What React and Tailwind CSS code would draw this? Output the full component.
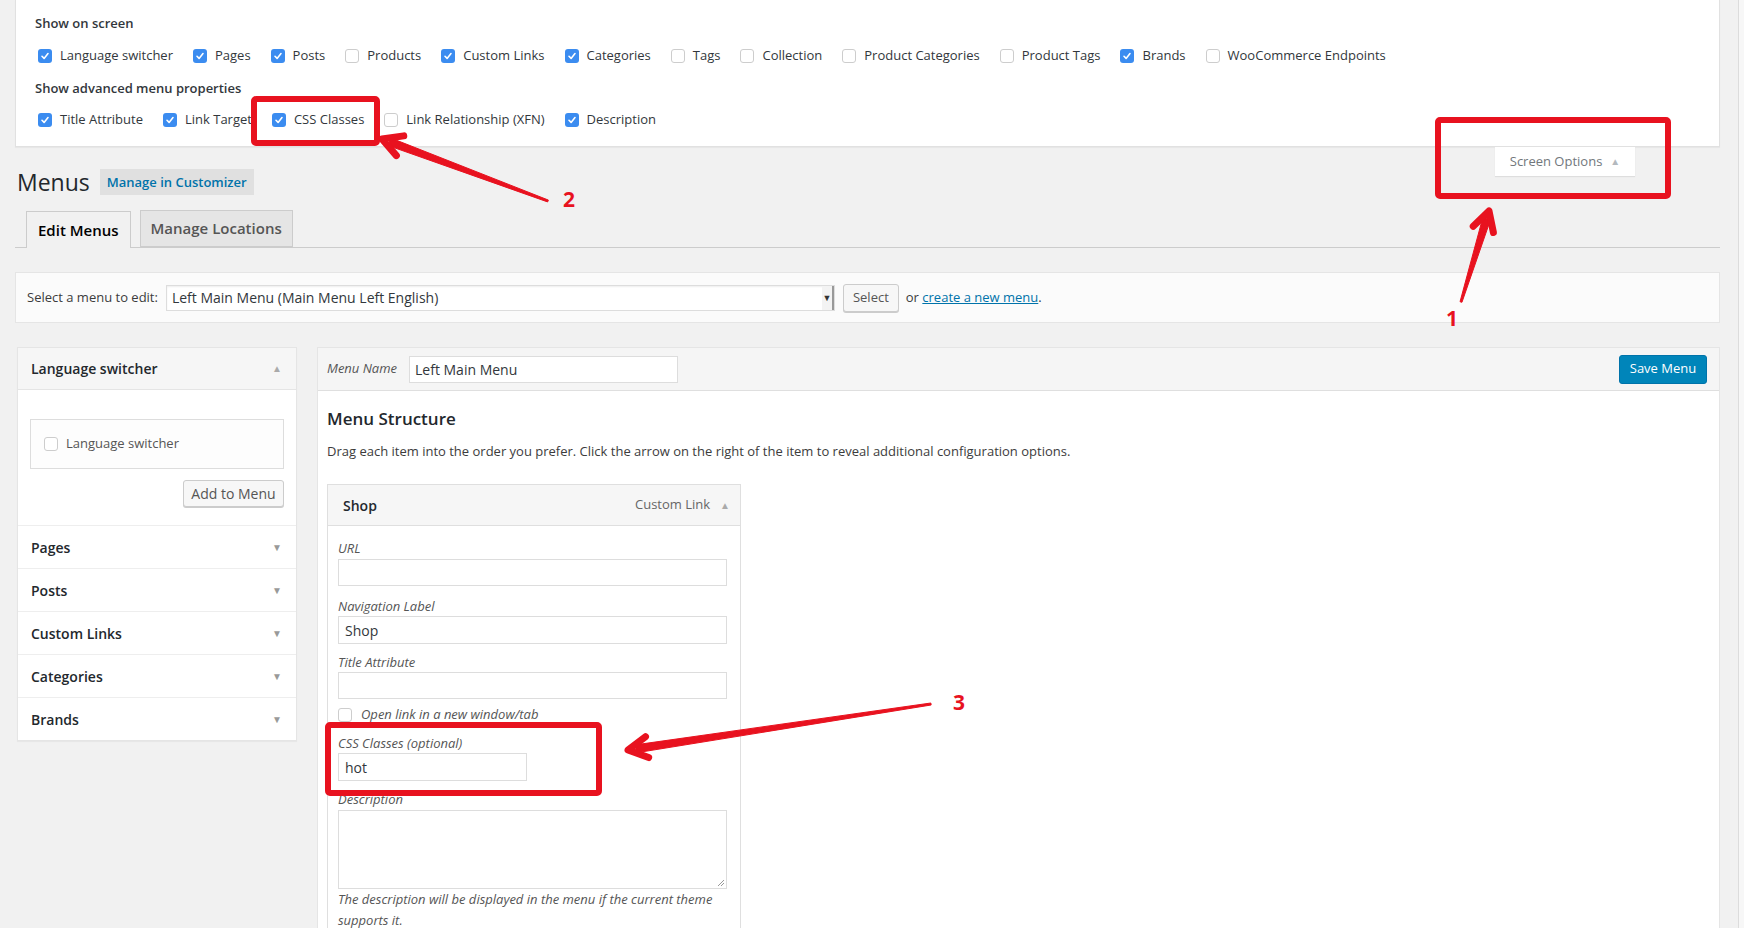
import React from "react";

const showItems = [
  ["Language switcher", true],
  ["Pages", true],
  ["Posts", true],
  ["Products", false],
  ["Custom Links", true],
  ["Categories", true],
  ["Tags", false],
  ["Collection", false],
  ["Product Categories", false],
  ["Product Tags", false],
  ["Brands", true],
  ["WooCommerce Endpoints", false],
];

const advItems = [
  ["Title Attribute", true],
  ["Link Target", true],
  ["CSS Classes", true],
  ["Link Relationship (XFN)", false],
  ["Description", true],
];

const sections = ["Pages", "Posts", "Custom Links", "Categories", "Brands"];

const Box = ({ on }) =>
  on ? (
    <span className="w-[14px] h-[14px] rounded-[3px] bg-[#3b8cf0] flex items-center justify-center shrink-0">
      <svg width="10" height="10" viewBox="0 0 10 10">
        <path d="M2 5.3 4.1 7.4 8 2.6" fill="none" stroke="#fff" strokeWidth="1.6" strokeLinecap="round" strokeLinejoin="round" />
      </svg>
    </span>
  ) : (
    <span className="w-[14px] h-[14px] rounded-[3px] border border-[#cdcdcd] bg-white shrink-0" />
  );

const Opt = ({ label, on }) => (
  <label className="flex items-center gap-[8px] mr-[20px]">
    <Box on={on} />
    <span>{label}</span>
  </label>
);

// tapered red arrow, tail -> tip
const Arrow = ({ x1, y1, x2, y2 }) => {
  const len = Math.hypot(x2 - x1, y2 - y1);
  const dx = (x2 - x1) / len;
  const dy = (y2 - y1) / len;
  const nx = -dy;
  const ny = dx;
  const hx = x2 - dx * 8;
  const hy = y2 - dy * 8;
  const shaft = [
    [x1 + nx * 1, y1 + ny * 1],
    [hx + nx * 4, hy + ny * 4],
    [hx - nx * 4, hy - ny * 4],
    [x1 - nx * 1, y1 - ny * 1],
  ]
    .map((p) => p.join(","))
    .join(" ");
  const arm = (a) => {
    const c = Math.cos(a);
    const s = Math.sin(a);
    const bx = -dx * c + dy * s;
    const by = -dx * s - dy * c;
    return [x2 + bx * 22, y2 + by * 22];
  };
  const [ax, ay] = arm(0.5);
  const [bx, by] = arm(-0.5);
  return (
    <g fill="#e8121f" stroke="#e8121f">
      <polygon points={shaft} strokeWidth="1" />
      <polyline
        points={`${ax},${ay} ${x2},${y2} ${bx},${by}`}
        fill="none"
        strokeWidth="7"
        strokeLinecap="round"
        strokeLinejoin="round"
      />
    </g>
  );
};

const Field = ({ label, children, className = "" }) => (
  <div className={className}>
    <div className="h-[18px] leading-[18px] italic text-[#555]">{label}</div>
    {children}
  </div>
);

const App = () => {
  return (
    <div className="relative w-[1744px] h-[928px] overflow-hidden bg-[#f1f1f1] flex font-['Open_Sans',sans-serif] text-[13px] text-[#3c3c3c]">
      <div className="w-[1738px] pl-[15px] pr-[18px] shrink-0">
        {/* screen options panel */}
        <div className="h-[147px] pt-[13px] bg-white border border-t-0 border-[#e1e1e1] shadow-[0_1px_1px_rgba(0,0,0,0.04)] pl-[19px] text-[#32373c]">
          <div className="h-[20px] leading-[20px] font-semibold">Show on screen</div>
          <div className="mt-[11px] h-[24px] flex items-center pl-[3px]">
            {showItems.map(([l, on]) => (
              <Opt key={l} label={l} on={on} />
            ))}
          </div>
          <div className="mt-[10px] h-[20px] leading-[20px] font-semibold">Show advanced menu properties</div>
          <div className="mt-[10px] h-[24px] flex items-center pl-[3px]">
            {advItems.map(([l, on]) => (
              <Opt key={l} label={l} on={on} />
            ))}
          </div>
        </div>

        {/* heading row */}
        <div className="flex justify-between items-start">
          <div className="mt-[22px] ml-[2px] flex items-center gap-[10px] h-[26px]">
            <h1 className="text-[23px] leading-[26px] text-[#23282d]">Menus</h1>
            <span className="h-[26px] px-[7px] bg-[#e0e0e0] text-[#0073aa] font-semibold leading-[26px]">
              Manage in Customizer
            </span>
          </div>
          <div className="mr-[85px] w-[140px] h-[29px] bg-white shadow-[0_1px_1px_rgba(0,0,0,0.08)] flex items-center justify-center gap-[8px] text-[#72777c]">
            <span>Screen Options</span>
            <span className="text-[10px] text-[#b4b9be]">▲</span>
          </div>
        </div>

        {/* tabs */}
        <div className="mt-[16px] border-b border-[#ccc] pl-[11px] flex items-end gap-[9px] h-[37px]">
          <div className="h-[37px] px-[11px] border border-b-0 border-[#ccc] bg-[#f1f1f1] -mb-px flex items-center text-[15px] font-semibold text-[#000]">
            Edit Menus
          </div>
          <div className="h-[37px] px-[10px] border border-[#ccc] bg-[#e5e5e5] flex items-center text-[15px] font-semibold text-[#555]">
            Manage Locations
          </div>
        </div>

        {/* select menu bar */}
        <div className="mt-[24px] h-[51px] bg-[#fbfbfb] border border-[#e5e5e5] flex items-center pl-[11px]">
          <span>Select a menu to edit:</span>
          <div className="ml-[8px] w-[669px] h-[26px] bg-white border border-[#ddd] flex items-center justify-between shadow-[inset_0_1px_2px_rgba(0,0,0,0.07)]">
            <span className="pl-[5px] text-[14px] text-[#32373c]">Left Main Menu (Main Menu Left English)</span>
            <span className="w-[12px] h-[24px] border-r-2 border-[#999] bg-[#f3f3f3] flex items-center justify-center text-[9px] text-[#333]">
              ▼
            </span>
          </div>
          <span className="ml-[8px] h-[28px] px-[9px] border border-[#ccc] bg-[#f7f7f7] rounded-[3px] shadow-[0_1px_0_#ccc] flex items-center text-[#555]">
            Select
          </span>
          <span className="ml-[7px]">
            or{" "}
            <span className="text-[#0073aa] underline">create a new menu</span>.
          </span>
        </div>

        {/* columns */}
        <div className="mt-[24px] flex items-start">
          <div className="ml-[2px] w-[280px] bg-white border border-[#e5e5e5] shadow-[0_1px_1px_rgba(0,0,0,0.04)] text-[#23282d]">
            <div className="h-[42px] bg-[#f6f6f6] border-b border-[#e5e5e5] flex items-center justify-between pl-[13px] pr-[14px]">
              <span className="text-[14px] font-semibold">Language switcher</span>
              <span className="text-[10px] text-[#aaa]">▲</span>
            </div>
            <div className="px-[12px] pt-[29px] pb-[18px]">
              <div className="h-[50px] border border-[#ddd] bg-[#fdfdfd] flex items-center pl-[13px] gap-[8px] text-[#555]">
                <Box on={false} />
                <span>Language switcher</span>
              </div>
              <div className="mt-[11px] flex justify-end">
                <span className="h-[27px] w-[101px] border border-[#ccc] bg-[#f7f7f7] rounded-[3px] shadow-[0_1px_0_#ccc] flex items-center justify-center text-[14px] text-[#555]">
                  Add to Menu
                </span>
              </div>
            </div>
            {sections.map((s) => (
              <div
                key={s}
                className="h-[43px] border-t border-[#eee] flex items-center justify-between pl-[13px] pr-[14px]"
              >
                <span className="text-[14px] font-semibold">{s}</span>
                <span className="text-[10px] text-[#999]">▼</span>
              </div>
            ))}
          </div>

          <div className="ml-[20px] flex-1 h-[600px] bg-white border border-[#e5e5e5]">
            <div className="h-[43px] bg-[#f5f5f5] border-b border-[#dfdfdf] flex items-center justify-between pl-[9px] pr-[12px]">
              <div className="flex items-center gap-[12px]">
                <span className="italic text-[#555]">Menu Name</span>
                <span className="w-[269px] h-[27px] bg-white border border-[#ddd] flex items-center pl-[5px] text-[14px] text-[#32373c]">
                  Left Main Menu
                </span>
              </div>
              <span className="h-[29px] w-[88px] bg-[#0085ba] border border-[#0073aa] rounded-[3px] text-white flex items-center justify-center">
                Save Menu
              </span>
            </div>
            <div className="pl-[9px] pt-[16px]">
              <h3 className="h-[24px] leading-[24px] text-[17px] font-semibold text-[#23282d]">
                Menu Structure
              </h3>
              <p className="mt-[10px] h-[20px] leading-[20px]">
                Drag each item into the order you prefer. Click the arrow on the right of the item to reveal additional configuration options.
              </p>
              <div className="mt-[23px] w-[414px] border border-[#dfdfdf]">
                <div className="h-[41px] bg-[#f6f6f6] border-b border-[#dfdfdf] flex items-center justify-between pl-[15px] pr-[10px]">
                  <span className="text-[14px] font-semibold text-[#23282d]">Shop</span>
                  <span className="flex items-center gap-[10px] text-[#666]">
                    Custom Link <span className="text-[10px] text-[#aaa]">▲</span>
                  </span>
                </div>
                <div className="pl-[10px] pr-[13px] pt-[13px] pb-[10px]">
                  <Field label="URL">
                    <div className="mt-[2px] h-[27px] border border-[#ddd] bg-white" />
                  </Field>
                  <Field label="Navigation Label" className="mt-[11px]">
                    <div className="mt-[1px] h-[28px] border border-[#ddd] bg-white flex items-center pl-[6px] text-[14px] text-[#32373c]">
                      Shop
                    </div>
                  </Field>
                  <Field label="Title Attribute" className="mt-[9px]">
                    <div className="mt-[1px] h-[27px] border border-[#ddd] bg-white" />
                  </Field>
                  <div className="mt-[6px] h-[20px] flex items-center gap-[9px] italic text-[#555]">
                    <Box on={false} />
                    <span>Open link in a new window/tab</span>
                  </div>
                  <Field label="CSS Classes (optional)" className="mt-[9px]">
                    <div className="mt-[1px] w-[189px] h-[28px] border border-[#ddd] bg-white flex items-center pl-[6px] text-[14px] text-[#32373c]">
                      hot
                    </div>
                  </Field>
                  <Field label="Description" className="mt-[9px]">
                    <div className="relative mt-[2px] h-[79px] border border-[#ddd] bg-white">
                      <svg className="absolute right-[1px] bottom-[1px]" width="9" height="9" viewBox="0 0 9 9">
                        <path d="M8 2 2 8M8 5 5 8" stroke="#999" strokeWidth="1" />
                      </svg>
                    </div>
                  </Field>
                  <p className="leading-[21px] italic text-[#555]">
                    The description will be displayed in the menu if the current theme supports it.
                  </p>
                </div>
              </div>
            </div>
          </div>
        </div>
      </div>
      <div className="flex-1 border-l border-[#dcdcdc] bg-[#f7f7f7]" />

      {/* annotations */}
      <svg className="absolute inset-0 pointer-events-none" width="1744" height="928">
        <g fill="none" stroke="#e8121f" strokeWidth="6">
          <rect x="254" y="99" width="123" height="44" rx="2" />
          <rect x="1438" y="120" width="230" height="76" rx="2" />
          <rect x="328" y="725" width="271" height="68" rx="2" />
        </g>
        <Arrow x1={548} y1={201} x2={382} y2={139} />
        <Arrow x1={1461} y1={302} x2={1489} y2={211} />
        <Arrow x1={931} y1={704} x2={628} y2={750} />
        <g fill="#e8121f" fontFamily="'Open Sans', sans-serif" fontWeight="700" fontSize="21" textAnchor="middle">
          <text x="569" y="207">2</text>
          <text x="1452" y="326">1</text>
          <text x="959" y="710">3</text>
        </g>
      </svg>
    </div>
  );
};

export default App;
